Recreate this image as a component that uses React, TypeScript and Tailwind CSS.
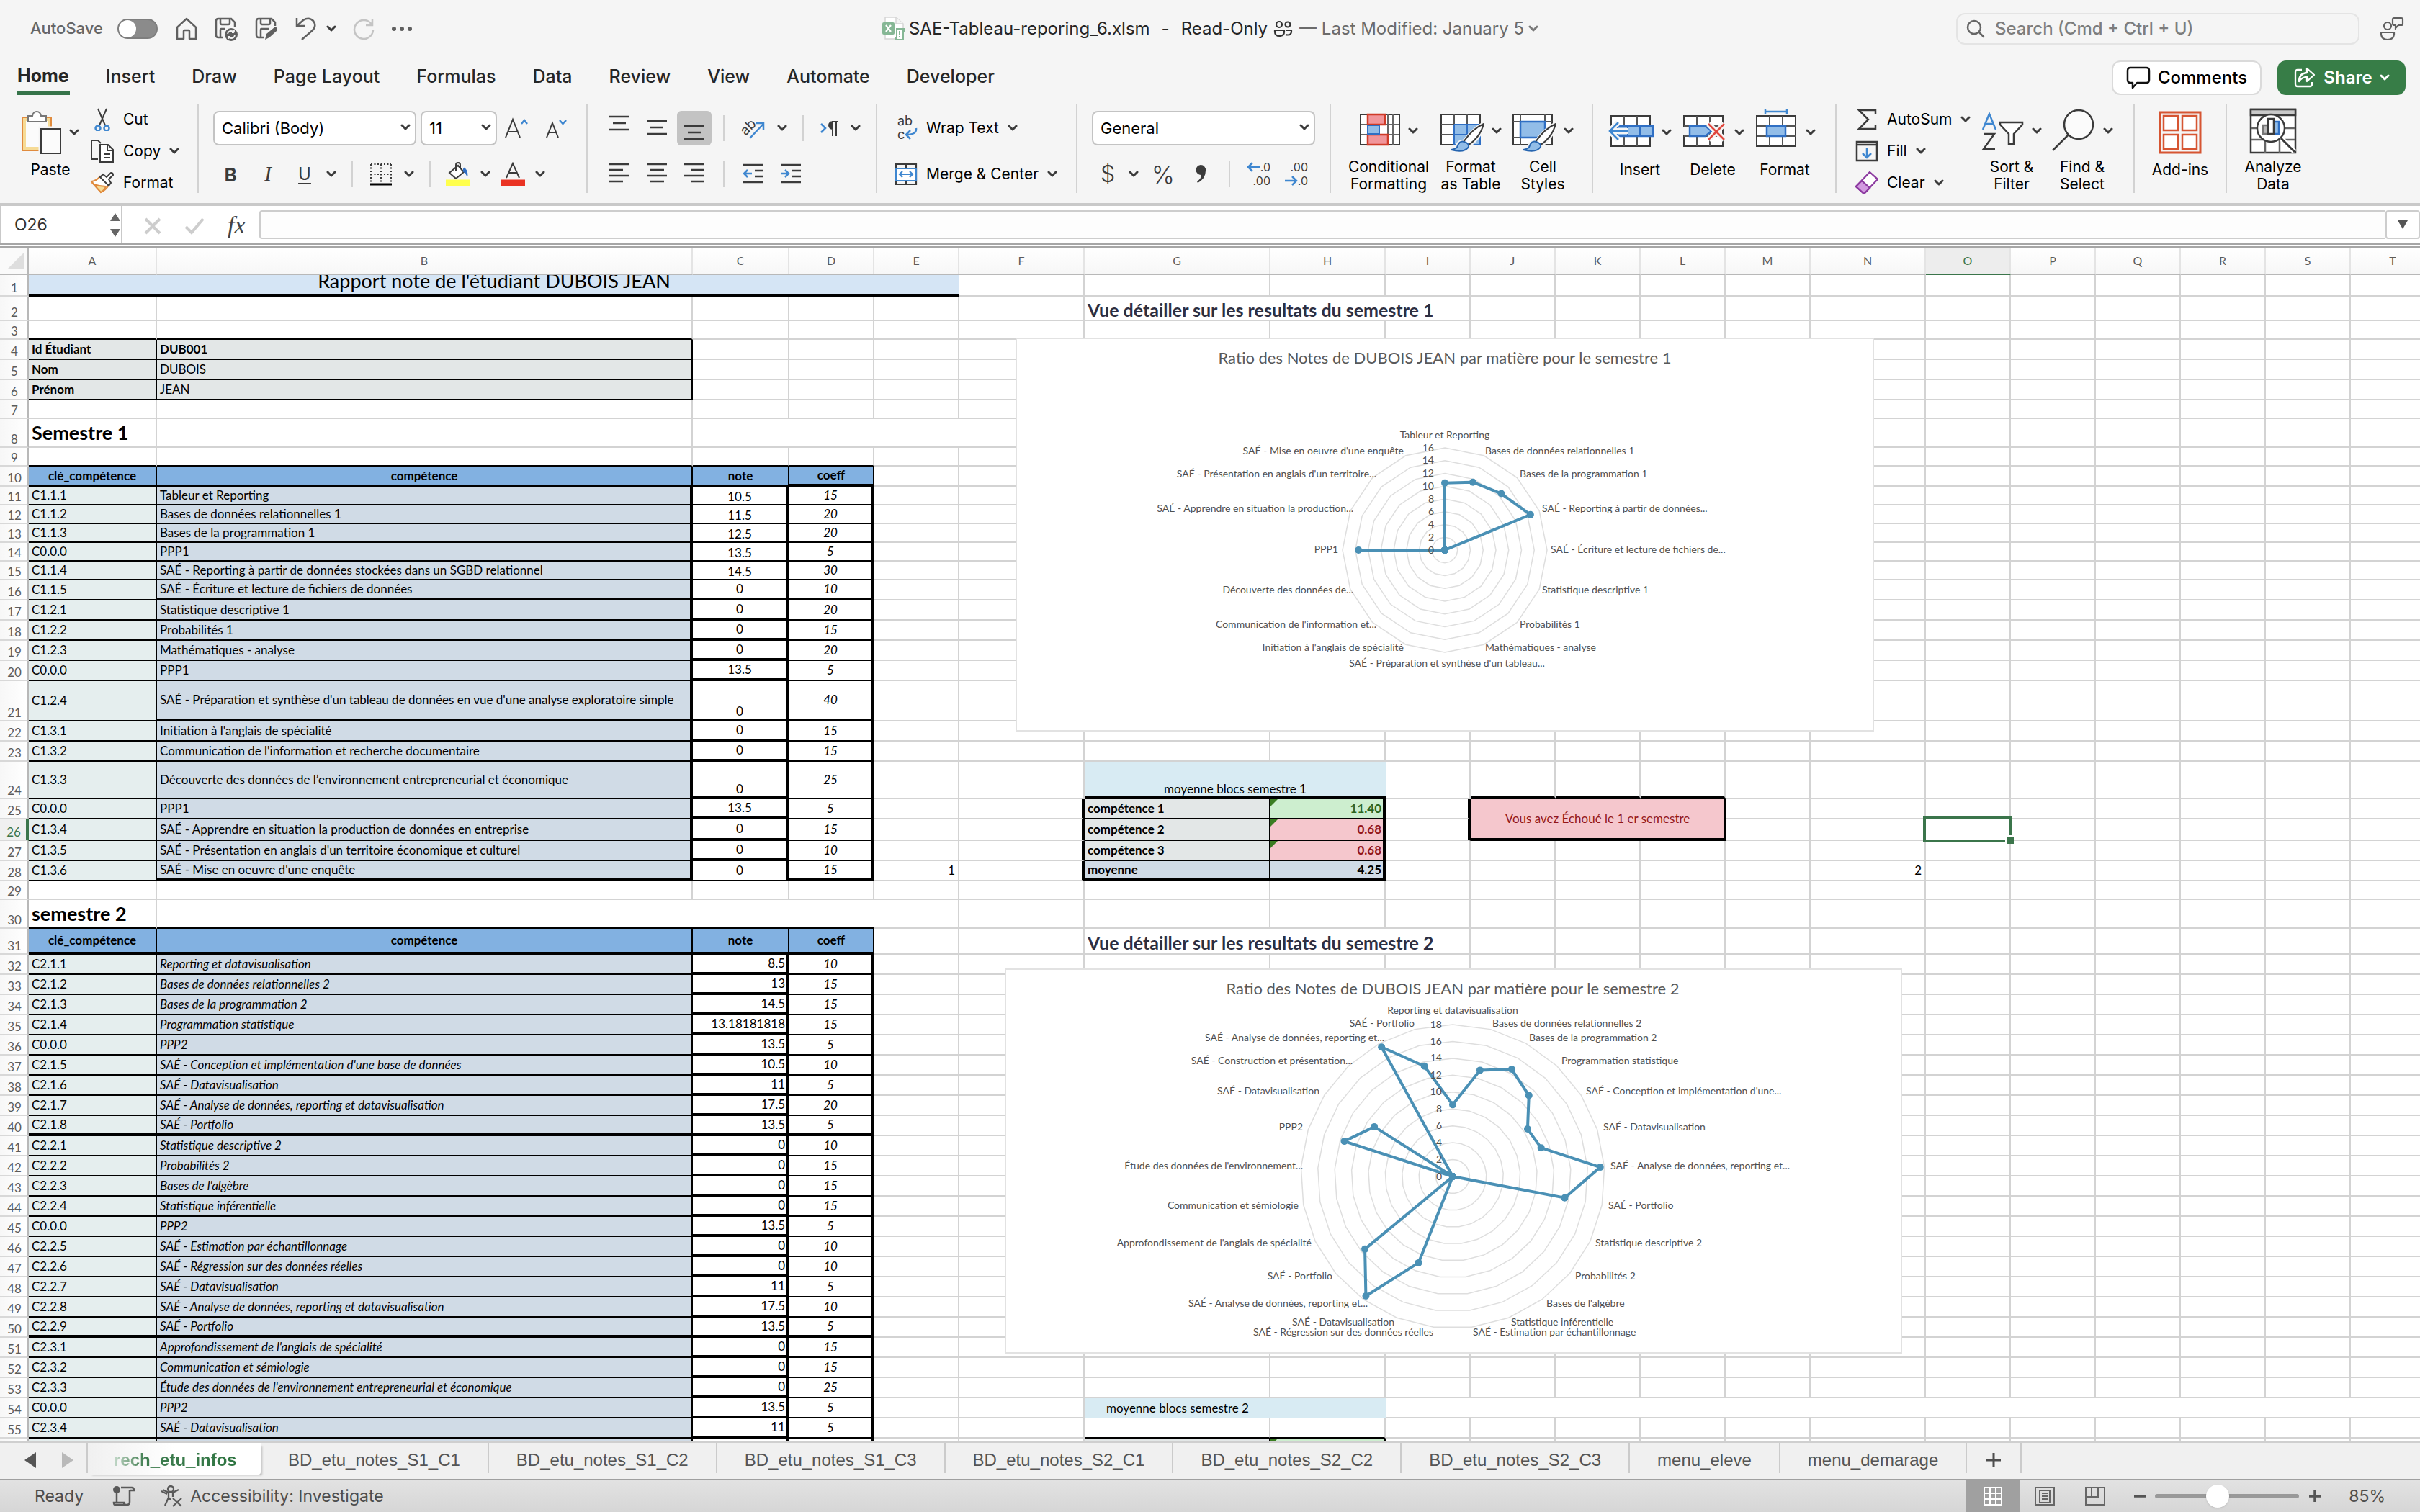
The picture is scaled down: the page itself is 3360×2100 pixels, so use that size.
import React from "react";

/* ---------- icons ---------- */

type IconProps = { w?: number; h?: number; vb?: string; children: React.ReactNode; stroke?: string; sw?: number };
const Icon = ({ w = 32, h = 32, vb, children, stroke = "#3b3b3b", sw = 2 }: IconProps) => (
  <svg
    width={w}
    height={h}
    viewBox={vb ?? `0 0 ${w} ${h}`}
    fill="none"
    stroke={stroke}
    strokeWidth={sw}
    aria-hidden="true"
    className="shrink-0"
  >
    {children}
  </svg>
);

const Chevron = ({ color = "#3b3b3b" }: { color?: string }) => (
  <Icon w={14} h={14} stroke={color} sw={3}>
    <path d="m2 4 5 5 5-5" strokeLinecap="round" strokeLinejoin="round" />
  </Icon>
);

const HomeIcon = () => (
  <Icon w={32} h={32} stroke="#606060" sw={2.5}>
    <path d="M3 14 16 2l13 12v16h-9V19q0-1-1-1h-6q-1 0-1 1v11H3Z" strokeLinejoin="round" />
  </Icon>
);
const SaveSyncIcon = () => (
  <Icon w={34} h={34} stroke="#606060" sw={2.5}>
    <path d="M13 29H6q-3 0-3-3V6q0-3 3-3h18l5 5v7M9 3v6q0 2 2 2h9q2 0 2-2V3M9 29V18q0-1 1-1h6" />
    <circle cx="24" cy="25" r="9" fill="#606060" stroke="none" />
    <path d="M19 24q1-4 5-4 3 0 4 2v-3m0 3h-3M29 26q-1 4-5 4-3 0-4-2v3m0-3h3" stroke="#f5f5f5" strokeWidth="1.8" />
  </Icon>
);
const SaveEditIcon = () => (
  <Icon w={34} h={34} stroke="#606060" sw={2.5}>
    <path d="M14 29H6q-3 0-3-3V6q0-3 3-3h18l5 5v5M9 3v6q0 2 2 2h9q2 0 2-2V3M9 29V18q0-1 1-1h10" />
    <path d="m15 32 2-8 11-9q3-1 4 2 0 2-1 3L21 29Z" fill="#606060" stroke="none" />
  </Icon>
);
const UndoIcon = () => (
  <Icon w={32} h={34} stroke="#606060" sw={2.5}>
    <path d="M3 2v11h11M3 13 12 5q8-5 14 1 5 7-1 13L10 32" />
  </Icon>
);
const RedoIcon = () => (
  <Icon w={32} h={32} stroke="#c4c4c4" sw={2.5}>
    <path d="M28 2v9h-9M27 10A13 13 0 1 0 29 18" />
  </Icon>
);
const DotsIcon = () => (
  <Icon w={30} h={8} stroke="none">
    <g fill="#606060">
      <circle cx="4" cy="4" r="3" />
      <circle cx="15" cy="4" r="3" />
      <circle cx="26" cy="4" r="3" />
    </g>
  </Icon>
);
const FileIcon = () => (
  <Icon w={34} h={34} stroke="none">
    <path d="M5 1h15l10 9v21H5Z" fill="#fff" stroke="#d5d5d5" strokeWidth="1.5" />
    <path d="M20 1v9h10" stroke="#d5d5d5" strokeWidth="1.5" fill="#f4f4f4" />
    <rect x="1" y="8" width="17" height="17" rx="2" fill="#86b795" />
    <path d="m6 12 7 9M13 12l-7 9" stroke="#fff" strokeWidth="2.2" />
    <path d="M21 17h11v3h-2v12H20v-3h1Z" fill="#fff" stroke="#86b795" strokeWidth="2" />
    <path d="M25 20v5M25 27v2" stroke="#86b795" strokeWidth="2" />
  </Icon>
);
const PeopleIcon = () => (
  <Icon w={28} h={24} stroke="#333" sw={2.2}>
    <circle cx="8" cy="6" r="4" />
    <circle cx="20" cy="6" r="3.5" />
    <path d="M2 14h13v2q0 6-6.500 6T2 16ZM18 14h7v1.500q0 5-5 5-2 0-3-.5" />
  </Icon>
);
const PresenceIcon = () => (
  <Icon w={34} h={34} stroke="#606060" sw={2.2}>
    <circle cx="11" cy="13" r="5" />
    <path d="M2 22h18v3q-1 7-9 7t-9-7ZM18 4q0-2 2-2h10q2 0 2 2v6q0 2-2 2h-4l-4 4v-4h-2q-2 0-2-2Z" />
  </Icon>
);
const SearchIcon = () => (
  <Icon w={26} h={26} stroke="#666" sw={2.5}>
    <circle cx="11" cy="11" r="9" />
    <path d="m17.500 17.500 7 7" />
  </Icon>
);
const CommentIcon = () => (
  <Icon w={34} h={32} stroke="#111" sw={2.5}>
    <path d="M2 6q0-4 4-4h22q4 0 4 4v13q0 4-4 4H15l-6 7v-7H6q-4 0-4-4Z" strokeLinejoin="round" />
  </Icon>
);
const ShareIcon = () => (
  <Icon w={32} h={30} stroke="#fff" sw={2.3}>
    <path d="M12 4H6Q3 4 3 7v17q0 3 3 3h17q3 0 3-3v-3" />
    <path d="M19 2v6Q8 9 8 20q4-6 11-6v6l10-9Z" strokeLinejoin="round" />
  </Icon>
);
const PasteIcon = () => (
  <Icon w={56} h={62} sw={2}>
    <rect x="1" y="10" width="40" height="46" fill="#f6db96" stroke="#e08b3e" />
    <rect x="6" y="15" width="30" height="36" fill="#fbfbfb" stroke="none" />
    <path d="M9 8h6q1-6 6-6t6 6h7v8H9Z" fill="#fff" stroke="#777" />
    <path d="M25 24h30v37H25Z" fill="#f5f5f5" stroke="#f5f5f5" strokeWidth="3" />
    <rect x="27" y="26" width="27" height="34" fill="#fbfbfb" />
  </Icon>
);
const CutIcon = () => (
  <Icon w={34} h={32}>
    <path d="m11 1 10 23M23 1 13 24" />
    <g stroke="#3f87d0" strokeWidth="2.5">
      <circle cx="11" cy="28" r="3.500" />
      <circle cx="23" cy="28" r="3.500" />
    </g>
  </Icon>
);
const CopyIcon = () => (
  <Icon w={34} h={32} sw={2}>
    <path d="M11 27H2V1h9l4 4" />
    <path d="M14 7h11l7 7v17H14ZM24 7v8h8M19 20h9M19 25h9" fill="#fff" />
  </Icon>
);
const BrushIcon = () => (
  <Icon w={34} h={32}>
    <path d="M2 14q7-1 12-7l12 12q-4 7-11 10Z" fill="#fff" stroke="#e08b3e" />
    <path d="M5 18q9 3 17 3-2 5-7 8Z" fill="#f6db96" stroke="#e08b3e" />
    <path d="m14 8 4-4 5 4 6-6q3 0 3 3l-6 6 3 5-3 4Z" fill="#fff" />
  </Icon>
);
const BigA = ({ down }: { down?: boolean }) => (
  <Icon w={34} h={30}>
    {down ? <path d="m5 28 8-20 8 20M8 21h10" /> : <path d="m2 28 10-25 10 25M5 20h14" />}
    {down ? <path d="m23 4 4.500 5L32 4" stroke="#3f87d0" strokeWidth="2.500" /> : <path d="m24 9 4-5 4 5" stroke="#3f87d0" strokeWidth="2.500" />}
  </Icon>
);
const BordersIcon = () => (
  <Icon w={32} h={32}>
    <path d="M2 2h28M2 16h28M2 2v26M16 2v26M30 2v26" strokeDasharray="2 2.500" />
    <path d="M1 30h30" stroke="#000" strokeWidth="3" />
  </Icon>
);
const FillColorIcon = () => (
  <Icon w={34} h={34}>
    <path d="M5 15 17 5l8 9-11 9Z" fill="#fff" />
    <path d="M14 12V4q0-3 3-3t3 3v5" />
    <path d="M25 8q5 2 5 12-3-6-6-7Z" fill="#2f6fc4" stroke="#2f6fc4" strokeWidth="1" />
    <path d="M0 29h34" stroke="#ffff4d" strokeWidth="9" />
  </Icon>
);
const FontColorIcon = () => (
  <Icon w={34} h={34}>
    <path d="m8 22 9-20 9 20M11 15h12" />
    <path d="M0 29h34" stroke="#ea3323" strokeWidth="9" />
  </Icon>
);

const lines = (spec: [number, number, number][]) => (
  <g>
    {spec.map(([x1, x2, y], i) => (
      <path key={i} d={`M${x1} ${y}H${x2}`} />
    ))}
  </g>
);
const AlignIcon = ({ kind }: { kind: "top" | "mid" | "bot" | "left" | "center" | "right" }) => {
  const three = (o: number): [number, number, number][] => [[0, 28, o], [5, 23, o + 9], [0, 28, o + 18]];
  const spec: Record<string, [number, number, number][]> = {
    top: three(2),
    mid: three(8),
    bot: three(15),
    left: [[0, 28, 4], [0, 19, 12], [0, 28, 20], [0, 19, 28]],
    center: [[0, 28, 4], [4, 24, 12], [0, 28, 20], [4, 24, 28]],
    right: [[0, 28, 4], [9, 28, 12], [0, 28, 20], [9, 28, 28]],
  };
  return (
    <Icon w={28} h={36} sw={2.5}>
      {lines(spec[kind])}
    </Icon>
  );
};
const IndentIcon = ({ inc }: { inc?: boolean }) => (
  <Icon w={28} h={32} sw={2.500}>
    {lines([[0, 28, 3], [16, 28, 11], [16, 28, 19], [0, 28, 27]])}
    {inc ? <path d="M0 15h10M6 10l5 5-5 5" stroke="#3f87d0" /> : <path d="M12 15H2M6 10l-5 5 5 5" stroke="#3f87d0" />}
  </Icon>
);
const OrientIcon = () => (
  <svg width="44" height="44" viewBox="-4 -5 44 44" className="shrink-0" aria-hidden="true">
    <text x="1" y="23" transform="rotate(-45 10 18)" fontSize="19" fontFamily="Inter, sans-serif" fill="#3b3b3b">
      ab
    </text>
    <path d="M13 31 32 11M22 10h10v10" fill="none" stroke="#3f87d0" strokeWidth="2.500" />
  </svg>
);
const DirectionIcon = () => (
  <svg width="28" height="28" viewBox="0 0 28 28" aria-hidden="true">
    <path d="m2 8 6 6-6 6" fill="none" stroke="#3f87d0" strokeWidth="2.500" />
    <path d="M18 5a5 5 0 0 0 0 10ZM18 5v20M23 5v20M17 5h9" fill="#3b3b3b" stroke="#3b3b3b" strokeWidth="2" />
  </svg>
);
const WrapIcon = () => (
  <svg width="32" height="44" viewBox="0 -4 32 44" className="shrink-0" aria-hidden="true">
    <g fontSize="18" fontFamily="Inter, sans-serif" fill="#3b3b3b">
      <text x="4" y="14">ab</text>
      <text x="4" y="33">c</text>
    </g>
    <path d="M30 18q1 9-13 9M22 21l-6 6 6 6" fill="none" stroke="#3f87d0" strokeWidth="2.500" />
  </svg>
);
const MergeIcon = () => (
  <Icon w={32} h={32} sw={2.2}>
    <path d="M2 2h28v28H2ZM16 2v28" />
    <path d="M2 8h28v17H2Z" fill="#fff" stroke="#3f87d0" />
    <path d="M7 16h18M11 12l-4 4 4 4M21 12l4 4-4 4" stroke="#3f87d0" />
  </Icon>
);
const DecimalIcon = ({ inc }: { inc?: boolean }) => (
  <svg width="34" height="44" viewBox="0 -5 34 44" className="shrink-0" aria-hidden="true">
    <g fontSize="16" fontFamily="Inter, sans-serif" fill="#3b3b3b" textAnchor="end">
      <text x="33" y="13">{inc ? ".0" : ".00"}</text>
      <text x="33" y="32">{inc ? ".00" : ".0"}</text>
    </g>
    {inc ? (
      <path d="M18 7H2M8 1 2 7l6 6" fill="none" stroke="#3f87d0" strokeWidth="2.500" />
    ) : (
      <path d="M1 26h16M11 20l6 6-6 6" fill="none" stroke="#3f87d0" strokeWidth="2.500" />
    )}
  </svg>
);
const CondIcon = () => (
  <Icon w={58} h={64} vb="0 2 58 64">
    <path d="M2 11h54v42H2Z" fill="#fff" />
    <path d="M2 25h54M2 39h54M12 11v42M40 11v42M47 11v42" stroke="#666" />
    <path d="M12 11h24v14H12ZM12 39h28v14H12Z" fill="#f1959a" stroke="#cf3a27" strokeWidth="2.500" />
    <path d="M12 26h16v12H12Z" fill="#92bde8" stroke="#2f6fc4" />
  </Icon>
);
const PaintBrush = () => (
  <g>
    <path d="M61 23Q45 32 34 48l6 5Q56 42 61 23ZM34 48q7 1 6 7-5 8-24 4 8-1 9-6 3-6 9-5Z" fill="#fff" stroke="#f5f5f5" strokeWidth="6" />
    <path d="M61 23Q45 30 33 48l6 5Q56 42 61 23Z" fill="#fff" />
    <path d="M34 48q7 2 6 7-6 9-24 4 8-1 9-6 3-7 9-5Z" fill="#92bde8" stroke="#2665b0" />
  </g>
);
const TableStyleIcon = () => (
  <Icon w={62} h={64} vb="0 1 62 64">
    <path d="M2 10h54v42H2Z" fill="#fff" />
    <path d="M20 24h36v28H20Z" fill="#92bde8" stroke="#2f6fc4" />
    <path d="M2 24h54M2 38h54M20 10v42M38 10v42" stroke="#555" />
    <path d="M20 24h36M20 38h36M20 24v28M38 24v28" stroke="#2f6fc4" />
    <PaintBrush />
  </Icon>
);
const CellStyleIcon = () => (
  <Icon w={62} h={64} vb="0 1 62 64">
    <path d="M2 10h54v42H2Z" fill="#fff" />
    <path d="M2 20h54M2 42h54M12 10v42M46 10v42" stroke="#555" />
    <path d="M12 20h34v22H12Z" fill="#92bde8" stroke="#2f6fc4" strokeWidth="2.500" />
    <PaintBrush />
  </Icon>
);
const SheetBase = () => (
  <g>
    <path d="M4 11h54v42H4Z" fill="#fff" />
    <path d="M4 25h54M4 39h54M22 11v42M40 11v42" stroke="#555" />
  </g>
);
const InsertIcon = () => (
  <Icon w={64} h={64} vb="0 2 64 64">
    <SheetBase />
    <path d="M62 25v14H12V25Z" fill="#92bde8" stroke="#2f6fc4" strokeWidth="2.500" />
    <path d="M27 25v14M44 25v14" stroke="#2f6fc4" />
    <path d="M1 32h26M14 20 2 32l12 12" stroke="#f5f5f5" strokeWidth="8" />
    <path d="M1 32h26M14 20 2 32l12 12" stroke="#3f87d0" strokeWidth="2.500" />
  </Icon>
);
const DeleteIcon = () => (
  <Icon w={64} h={64} vb="0 2 64 64">
    <SheetBase />
    <path d="M0 26h10v12H0Z" fill="#f5f5f5" stroke="none" />
    <path d="M12 25h22l8 7-8 7H12Z" fill="#92bde8" stroke="#2f6fc4" strokeWidth="2.500" />
    <path d="m38 22 22 22M60 22 38 44" stroke="#f5f5f5" strokeWidth="8" />
    <path d="m38 22 22 22M60 22 38 44" stroke="#e0473d" strokeWidth="2.500" />
  </Icon>
);
const FormatIcon = () => (
  <Icon w={62} h={64} vb="0 2 62 64">
    <SheetBase />
    <path d="M18 25h26v14H18Z" fill="#92bde8" stroke="#2f6fc4" strokeWidth="2.500" />
    <path d="M16 5h30M16 2v6M46 2v6" stroke="#3f87d0" strokeWidth="2.500" />
  </Icon>
);
const SigmaIcon = () => (
  <Icon w={32} h={32} sw={2.500}>
    <path d="M28 8V3H5l13 13L5 29h23v-5" />
  </Icon>
);
const FillIcon = () => (
  <Icon w={32} h={32} sw={2.500}>
    <path d="M2 3h28v26H2ZM2 7h28" />
    <path d="M16 11v14M10 19l6 6 6-6" stroke="#3f87d0" />
  </Icon>
);
const ClearIcon = () => (
  <Icon w={32} h={32} stroke="#8c3aa0" sw={2.300}>
    <path d="M20 1 31 11 12 31 1 21Z" fill="#fff" />
    <path d="M9 13 20 23 12 31 1 21Z" fill="#d29be0" />
  </Icon>
);
const SortIcon = () => (
  <Icon w={60} h={60} sw={2.500}>
    <path d="m2 28 9-22 9 22M5 20h12" stroke="#3f87d0" />
    <path d="M3 34h15L3 55h16" />
    <path d="M26 18h31v3L45 34v14h-7V34L26 21Z" fill="#fff" />
  </Icon>
);
const FindIcon = () => (
  <Icon w={62} h={60} sw={2.500}>
    <circle cx="38" cy="21" r="20" fill="#fbfbfb" />
    <path d="M24 35 2 57" />
  </Icon>
);
const AddInsIcon = () => (
  <Icon w={60} h={60} stroke="#d65532" sw={3}>
    <path d="M2 2h56v56H2Z" />
    <path d="M7 7h20v20H7ZM33 7h20v20H33ZM7 33h20v20H7ZM33 33h20v20H33Z" fill="#fff" strokeWidth="2.500" />
  </Icon>
);
const AnalyzeIcon = () => (
  <Icon w={66} h={64} sw={2.500}>
    <path d="M2 2h62v60H2Z" fill="#fff" />
    <path d="M2 2h62v8H2Z" fill="#c9c9c9" />
    <path d="M2 28h62M2 44h62M22 44v18M42 44v18" stroke="#666" />
    <circle cx="30" cy="28" r="19" fill="#fff" />
    <path d="m44 42 19 19" stroke="#fff" strokeWidth="7" />
    <path d="m44 42 19 19" strokeWidth="3" />
    <path d="M19 24h8v12h-8Z" fill="#b9b9b9" stroke="#777" />
    <path d="M33 19h8v17h-8Z" fill="#92bde8" stroke="#2f6fc4" />
    <path d="M26 15h8v21h-8Z" fill="#fff" />
  </Icon>
);

/* ---------- ribbon parts ---------- */

const IconButton = ({ label, w, children }: { label: string; w: string; children: React.ReactNode }) => (
  <button aria-label={label} className={`flex h-12 shrink-0 items-center justify-center ${w}`}>
    {children}
  </button>
);
const Drop = ({ label }: { label: string }) => (
  <button aria-label={`${label} options`} className="flex h-12 w-7 shrink-0 items-center justify-center">
    <Chevron />
  </button>
);
const Sep = () => <div className="mx-3.5 h-9 w-0.5 shrink-0 bg-[#d2d2d2]" />;
const Group = ({ w, children, last }: { w: string; children: React.ReactNode; last?: boolean }) => (
  <div className={`flex h-[124px] shrink-0 ${last ? "" : "border-r-2 border-[#d2d2d2]"} ${w}`}>{children}</div>
);
const TwoRows = ({ pl, a, b }: { pl: string; a: React.ReactNode; b: React.ReactNode }) => (
  <div className={`flex flex-col gap-4 pt-2.5 ${pl}`}>
    <div className="flex h-12 items-center">{a}</div>
    <div className="flex h-12 items-center">{b}</div>
  </div>
);
const BigButton = ({ w, icon, label, drop = true }: { w: string; icon: React.ReactNode; label: string[]; drop?: boolean }) => (
  <button className={`flex h-[124px] shrink-0 flex-col items-center ${w}`}>
    <span className="flex h-20 items-center gap-2.5">
      {icon}
      {drop && <Chevron />}
    </span>
    {label.map((l) => (
      <span key={l} className="text-[21px] leading-6 whitespace-nowrap text-black">
        {l}
      </span>
    ))}
  </button>
);
const SmallButton = ({ icon, label, drop }: { icon: React.ReactNode; label: string; drop?: boolean }) => (
  <button className="flex h-11 shrink-0 items-center gap-3 text-[21px] whitespace-nowrap text-black">
    {icon}
    {label}
    {drop && <Chevron />}
  </button>
);
const Combo = ({ w, label, value }: { w: string; label: string; value: string }) => (
  <div className={`relative h-12 shrink-0 ${w}`}>
    <select
      aria-label={label}
      className="h-full w-full appearance-none rounded-lg border-2 border-[#c3c3c3] bg-white pl-2.5 text-[22px] text-black"
    >
      <option>{value}</option>
    </select>
    <span className="pointer-events-none absolute top-4 right-2">
      <Chevron />
    </span>
  </div>
);

const TitleBar = () => (
  <header className="grid h-20 grid-cols-[1fr_auto_1fr] items-center text-2xl">
    <div className="flex items-center pl-[42px]">
      <label className="flex items-center gap-5 text-[22px] font-medium text-[#666]">
        AutoSave
        <input
          type="checkbox"
          role="switch"
          className="h-7 w-14 appearance-none rounded-full border-2 border-[#7e7e7e] bg-[#8b8b8b] before:block before:size-6 before:rounded-full before:bg-white before:content-['']"
        />
      </label>
      <div className="flex items-center gap-[22px] pl-6">
        <button aria-label="Home"><HomeIcon /></button>
        <button aria-label="Save and sync"><SaveSyncIcon /></button>
        <button aria-label="Save as"><SaveEditIcon /></button>
        <button aria-label="Undo" className="flex items-center gap-3"><UndoIcon /><Chevron /></button>
        <button aria-label="Redo"><RedoIcon /></button>
        <button aria-label="More commands"><DotsIcon /></button>
      </div>
    </div>
    <button className="flex items-center whitespace-nowrap text-[#262626]">
      <FileIcon />
      <span className="pl-1">SAE-Tableau-reporing_6.xlsm</span>
      <span className="px-4">-</span>
      <span className="pr-2">Read-Only</span>
      <PeopleIcon />
      <span className="pr-1.5 pl-2 text-[#6b6b6b]">— Last Modified: January 5</span>
      <Chevron color="#7a7a7a" />
    </button>
    <div className="flex items-center justify-end gap-7 pr-[22px]">
      <label className="flex h-11 w-[560px] items-center gap-3.5 rounded-xl border-2 border-[#e4e4e4] pl-3">
        <SearchIcon />
        <input
          aria-label="Search"
          placeholder="Search (Cmd + Ctrl + U)"
          className="w-full bg-transparent font-medium outline-none placeholder:text-[#7d7d7d]"
        />
      </label>
      <button aria-label="Presence"><PresenceIcon /></button>
    </div>
  </header>
);

const menu = ["Insert", "Draw", "Page Layout", "Formulas", "Data", "Review", "View", "Automate", "Developer"];
const MenuBar = () => (
  <div className="flex h-16 items-start justify-between pr-5 pl-[23px]">
    <nav className="flex gap-[49px] text-[25px] leading-[50px] font-medium text-[#262626]">
      <button className="h-[52px] border-b-[6px] border-[#36744a] px-px leading-[50px] font-bold">Home</button>
      {menu.map((m) => (
        <button key={m} className="px-px whitespace-nowrap">{m}</button>
      ))}
    </nav>
    <div className="flex gap-[22px] pt-1 text-2xl font-medium">
      <button className="flex h-12 w-[208px] items-center justify-center gap-2.5 rounded-xl border-2 border-[#dadada] bg-white text-black">
        <CommentIcon />
        Comments
      </button>
      <button className="flex h-12 w-[178px] items-center justify-center gap-2.5 rounded-xl bg-[#377d47] font-semibold text-white">
        <ShareIcon />
        Share
        <Chevron color="#fff" />
      </button>
    </div>
  </div>
);

const Ribbon = () => (
  <div className="flex h-[142px] border-b-4 border-[#c9c9c9]">
    <Group w="w-[276px]">
      <div className="flex gap-4 pl-[31px]">
        <BigButton w="w-[78px]" icon={<PasteIcon />} label={["Paste"]} />
        <div className="flex flex-col">
          <SmallButton icon={<CutIcon />} label="Cut" />
          <SmallButton icon={<CopyIcon />} label="Copy" drop />
          <SmallButton icon={<BrushIcon />} label="Format" />
        </div>
      </div>
    </Group>
    <Group w="w-[540px]">
      <TwoRows
        pl="pl-5"
        a={
          <>
            <Combo w="w-[282px]" label="Font" value="Calibri (Body)" />
            <div className="w-1.5" />
            <Combo w="w-[106px]" label="Font size" value="11" />
            <IconButton label="Increase font size" w="w-[54px]"><BigA /></IconButton>
            <IconButton label="Decrease font size" w="w-[54px]"><BigA down /></IconButton>
          </>
        }
        b={
          <>
            <IconButton label="Bold" w="w-12"><span className="text-[26px] font-bold text-[#3b3b3b]">B</span></IconButton>
            <IconButton label="Italic" w="w-14"><span className="font-['Liberation_Serif',serif] text-[29px] text-[#3b3b3b] italic">I</span></IconButton>
            <IconButton label="Underline" w="w-[46px]"><span className="text-2xl text-[#3b3b3b] underline underline-offset-4">U</span></IconButton>
            <Drop label="Underline" />
            <Sep />
            <IconButton label="Borders" w="w-[50px]"><BordersIcon /></IconButton>
            <Drop label="Borders" />
            <Sep />
            <IconButton label="Fill color" w="w-12"><FillColorIcon /></IconButton>
            <Drop label="Fill color" />
            <IconButton label="Font color" w="w-12"><FontColorIcon /></IconButton>
            <Drop label="Font color" />
          </>
        }
      />
    </Group>
    <Group w="w-[402px]">
      <TwoRows
        pl="pl-[18px]"
        a={
          <>
            <IconButton label="Top align" w="w-[52px]"><AlignIcon kind="top" /></IconButton>
            <IconButton label="Middle align" w="w-[52px]"><AlignIcon kind="mid" /></IconButton>
            <IconButton label="Bottom align" w="w-12 mx-0.5 rounded-md bg-[#c3c3c3]"><AlignIcon kind="bot" /></IconButton>
            <Sep />
            <IconButton label="Orientation" w="w-[52px]"><OrientIcon /></IconButton>
            <Drop label="Orientation" />
            <Sep />
            <IconButton label="Text direction" w="w-11"><DirectionIcon /></IconButton>
            <Drop label="Text direction" />
          </>
        }
        b={
          <>
            <IconButton label="Align left" w="w-[52px]"><AlignIcon kind="left" /></IconButton>
            <IconButton label="Center" w="w-[52px]"><AlignIcon kind="center" /></IconButton>
            <IconButton label="Align right" w="w-[52px]"><AlignIcon kind="right" /></IconButton>
            <Sep />
            <IconButton label="Decrease indent" w="w-[52px]"><IndentIcon /></IconButton>
            <IconButton label="Increase indent" w="w-[52px]"><IndentIcon inc /></IconButton>
          </>
        }
      />
    </Group>
    <Group w="w-[278px]">
      <TwoRows
        pl="pl-6"
        a={<SmallButton icon={<WrapIcon />} label="Wrap Text" drop />}
        b={<SmallButton icon={<MergeIcon />} label="Merge & Center" drop />}
      />
    </Group>
    <Group w="w-[352px]">
      <TwoRows
        pl="pl-5"
        a={<Combo w="w-[310px]" label="Number format" value="General" />}
        b={
          <>
            <IconButton label="Currency" w="w-11"><span className="text-[32px] font-light text-[#3b3b3b]">$</span></IconButton>
            <Drop label="Currency" />
            <IconButton label="Percent" w="w-[54px]"><span className="text-[34px] font-light text-[#3b3b3b]">%</span></IconButton>
            <IconButton label="Comma style" w="w-[50px]">
              <Icon w={16} h={26} stroke="none"><path d="M8 0a7 7 0 0 1 7 8q0 11-11 17l-1-2q6-4 6-9A7 7 0 1 1 8 0Z" fill="#3b3b3b" /></Icon>
            </IconButton>
            <Sep />
            <IconButton label="Increase decimal" w="w-[52px]"><DecimalIcon inc /></IconButton>
            <IconButton label="Decrease decimal" w="w-[52px]"><DecimalIcon /></IconButton>
          </>
        }
      />
    </Group>
    <Group w="w-[364px]">
      <div className="flex gap-4 pl-6">
        <BigButton w="w-28" icon={<CondIcon />} label={["Conditional", "Formatting"]} />
        <BigButton w="w-[84px]" icon={<TableStyleIcon />} label={["Format", "as Table"]} />
        <BigButton w="w-[84px]" icon={<CellStyleIcon />} label={["Cell", "Styles"]} />
      </div>
    </Group>
    <Group w="w-[338px]">
      <div className="flex gap-4 pl-[22px]">
        <BigButton w="w-[86px]" icon={<InsertIcon />} label={["Insert"]} />
        <BigButton w="w-[84px]" icon={<DeleteIcon />} label={["Delete"]} />
        <BigButton w="w-[84px]" icon={<FormatIcon />} label={["Format"]} />
      </div>
    </Group>
    <Group w="w-[414px]">
      <div className="flex pl-[26px]">
        <div className="flex w-[174px] flex-col">
          <SmallButton icon={<SigmaIcon />} label="AutoSum" drop />
          <SmallButton icon={<FillIcon />} label="Fill" drop />
          <SmallButton icon={<ClearIcon />} label="Clear" drop />
        </div>
        <BigButton w="w-[86px]" icon={<SortIcon />} label={["Sort &", "Filter"]} />
        <div className="w-3.5" />
        <BigButton w="w-[82px]" icon={<FindIcon />} label={["Find &", "Select"]} />
      </div>
    </Group>
    <Group w="w-[128px]">
      <BigButton w="w-[126px]" icon={<AddInsIcon />} label={["Add-ins"]} drop={false} />
    </Group>
    <Group w="w-[128px]" last>
      <BigButton w="w-[128px]" icon={<AnalyzeIcon />} label={["Analyze", "Data"]} drop={false} />
    </Group>
  </div>
);

const FormulaBar = () => (
  <div className="flex h-[58px] items-center border-b-[6px] border-double border-[#a6a6a6] bg-white">
    <div className="flex h-full w-[170px] shrink-0 items-center border-x-2 border-[#c9c9c9] pl-[18px]">
      <input aria-label="Name box" defaultValue="O26" className="w-full bg-transparent text-[23px] text-[#333] outline-none" />
      <button aria-label="Name box options" className="pr-px">
        <Icon w={14} h={36} stroke="none"><path d="M7 2l7 11H0ZM7 35 0 24h14Z" fill="#666" /></Icon>
      </button>
    </div>
    <button aria-label="Cancel" className="pt-1 pl-[30px]">
      <Icon w={24} h={24} stroke="#cdcdcd" sw={4}><path d="m2 2 20 20M22 2 2 22" /></Icon>
    </button>
    <button aria-label="Enter" className="pt-1 pl-8">
      <Icon w={28} h={24} stroke="#cdcdcd" sw={4}><path d="m2 13 8 8L26 2" /></Icon>
    </button>
    <button aria-label="Insert function" className="w-[76px] pl-8 text-left font-['Liberation_Serif',serif] text-[34px] text-[#444] italic">fx</button>
    <input aria-label="Formula bar" className="h-10 flex-1 rounded-l border-2 border-r-0 border-[#cdcdcd] bg-[#fdfdfd] px-2 text-[22px] outline-none" />
    <button aria-label="Expand formula bar" className="flex h-10 w-12 items-center justify-center rounded border-2 border-[#cdcdcd] bg-white">
      <Icon w={14} h={12} stroke="none"><path d="M0 0h14L7 12Z" fill="#555" /></Icon>
    </button>
  </div>
);

/* ---------- worksheet ---------- */

const columns: [string, string][] = [
  ["A", "w-[178px]"], ["B", "w-[744px]"], ["C", "w-[134px]"], ["D", "w-[118px]"], ["E", "w-[118px]"],
  ["F", "w-[174px]"], ["G", "w-[258px]"], ["H", "w-[160px]"], ["I", "w-[118px]"], ["J", "w-[118px]"],
  ["K", "w-[118px]"], ["L", "w-[118px]"], ["M", "w-[118px]"], ["N", "w-[160px]"], ["O", "w-[118px]"],
  ["P", "w-[118px]"], ["Q", "w-[118px]"], ["R", "w-[118px]"], ["S", "w-[118px]"], ["T", "w-[118px]"],
];

const rowHeights: Record<number, string> = {
  1: "h-[30px]", 2: "h-[34px]", 3: "h-[26px]", 7: "h-[26px]", 8: "h-[40px]", 9: "h-[26px]",
  11: "h-[26px]", 12: "h-[26px]", 13: "h-[26px]", 14: "h-[26px]", 15: "h-[26px]",
  21: "h-[56px]", 24: "h-[52px]", 26: "h-[30px]", 29: "h-[26px]", 30: "h-[40px]", 31: "h-[36px]",
};

type Line = "grid" | "thin" | "thick" | "none";
const rightLine: Record<Line, string> = {
  grid: "border-r-2 border-r-[#d3d3d3]",
  thin: "border-r-2 border-r-black",
  thick: "border-r-4 border-r-black",
  none: "border-r-0",
};
const bottomLine: Record<Line, string> = {
  grid: "border-b-2 border-b-[#d3d3d3]",
  thin: "border-b-2 border-b-black",
  thick: "border-b-4 border-b-black",
  none: "border-b-0",
};

type Cell = { text?: React.ReactNode; cls?: string; right?: Line; bottom?: Line; span?: number; rows?: number };
const cells: Record<string, Cell> = {};
const put = (ref: string, c: Cell) => {
  cells[ref] = { ...cells[ref], ...c };
};

const KEY = "bg-[#e5eeee] pl-1";
const NAME = "bg-[#d0dbe6] pl-1";
const HEAD = "bg-[#82b1e1] text-center font-bold";
const INFO = "bg-[#e3e7e7] pl-1";

put("A1", {
  span: 5, bottom: "thick", right: "none", cls: "bg-[#d5e5f5]",
  text: <div className="flex h-[26px] items-end justify-center overflow-hidden text-[27px] leading-9">Rapport note de l'étudiant DUBOIS JEAN</div>,
});
put("A3", { bottom: "thin" });
put("B3", { bottom: "thin" });
[["Id Étudiant", "DUB001"], ["Nom", "DUBOIS"], ["Prénom", "JEAN"]].forEach(([a, b], i) => {
  put(`A${4 + i}`, { text: a, cls: `${INFO} font-bold`, right: "thin", bottom: "thin" });
  put(`B${4 + i}`, { text: b, cls: i ? INFO : `${INFO} font-bold`, right: "thin", bottom: "thin" });
});

put("A8", { text: "Semestre 1", cls: "pl-1 text-[27px] font-bold leading-8" });
put("C8", { span: 4, right: "none" });
put("A30", { text: "semestre 2", cls: "pl-1 text-[27px] font-bold leading-8" });

const head = (row: number, bottoms: Line[]) => {
  ["clé_compétence", "compétence", "note", "coeff"].forEach((t, i) => {
    const col = "ABCD"[i];
    put(`${col}${row - 1}`, { bottom: "thin" });
    put(`${col}${row}`, { text: t, cls: HEAD, right: "thin", bottom: bottoms[i] });
  });
};
head(10, ["thin", "thin", "thin", "thick"]);
head(31, ["thick", "thick", "thick", "thick"]);
put("B30", { span: 3, right: "none" });

const s1: [string, string, string, string][] = [
  ["C1.1.1", "Tableur et Reporting", "10.5", "15"],
  ["C1.1.2", "Bases de données relationnelles 1", "11.5", "20"],
  ["C1.1.3", "Bases de la programmation 1", "12.5", "20"],
  ["C0.0.0", "PPP1", "13.5", "5"],
  ["C1.1.4", "SAÉ - Reporting à partir de données stockées dans un SGBD relationnel", "14.5", "30"],
  ["C1.1.5", "SAÉ - Écriture et lecture de fichiers de données", "0", "10"],
  ["C1.2.1", "Statistique descriptive 1", "0", "20"],
  ["C1.2.2", "Probabilités 1", "0", "15"],
  ["C1.2.3", "Mathématiques - analyse", "0", "20"],
  ["C0.0.0", "PPP1", "13.5", "5"],
  ["C1.2.4", "SAÉ - Préparation et synthèse d'un tableau de données en vue d'une analyse exploratoire simple", "0", "40"],
  ["C1.3.1", "Initiation à l'anglais de spécialité", "0", "15"],
  ["C1.3.2", "Communication de l'information et recherche documentaire", "0", "15"],
  ["C1.3.3", "Découverte des données de l’environnement entrepreneurial et économique", "0", "25"],
  ["C0.0.0", "PPP1", "13.5", "5"],
  ["C1.3.4", "SAÉ - Apprendre en situation la production de données en entreprise", "0", "15"],
  ["C1.3.5", "SAÉ - Présentation en anglais d'un territoire économique et culturel", "0", "10"],
  ["C1.3.6", "SAÉ - Mise en oeuvre d'une enquête", "0", "15"],
];
s1.forEach(([k, n, note, c], i) => {
  const row = 11 + i;
  const end = [16, 21, 28].includes(row);
  const low = row < 16 || row === 21 || row === 24;
  put(`A${row}`, { text: k, cls: KEY, right: "thin", bottom: "thin" });
  put(`B${row}`, { text: n, cls: NAME, right: "thick", bottom: end ? "thick" : "thin" });
  put(`C${row}`, { text: note, cls: low ? "text-center align-bottom" : "text-center", right: "thick", bottom: row >= 16 && row !== 28 ? "thick" : "thin" });
  put(`D${row}`, { text: c, cls: "text-center italic", right: "thick", bottom: end ? "thick" : "thin" });
});

const s2: [string, string, string, string][] = [
  ["C2.1.1", "Reporting et datavisualisation", "8.5", "10"],
  ["C2.1.2", "Bases de données relationnelles 2", "13", "15"],
  ["C2.1.3", "Bases de la programmation 2", "14.5", "15"],
  ["C2.1.4", "Programmation statistique", "13.18181818", "15"],
  ["C0.0.0", "PPP2", "13.5", "5"],
  ["C2.1.5", "SAÉ - Conception et implémentation d'une base de données", "10.5", "10"],
  ["C2.1.6", "SAÉ - Datavisualisation", "11", "5"],
  ["C2.1.7", "SAÉ - Analyse de données, reporting et datavisualisation", "17.5", "20"],
  ["C2.1.8", "SAÉ - Portfolio", "13.5", "5"],
  ["C2.2.1", "Statistique descriptive 2", "0", "10"],
  ["C2.2.2", "Probabilités 2", "0", "15"],
  ["C2.2.3", "Bases de l'algèbre", "0", "15"],
  ["C2.2.4", "Statistique inférentielle", "0", "15"],
  ["C0.0.0", "PPP2", "13.5", "5"],
  ["C2.2.5", "SAÉ - Estimation par échantillonnage", "0", "10"],
  ["C2.2.6", "SAÉ - Régression sur des données réelles", "0", "10"],
  ["C2.2.7", "SAÉ - Datavisualisation", "11", "5"],
  ["C2.2.8", "SAÉ - Analyse de données, reporting et datavisualisation", "17.5", "10"],
  ["C2.2.9", "SAÉ - Portfolio", "13.5", "5"],
  ["C2.3.1", "Approfondissement de l'anglais de spécialité", "0", "15"],
  ["C2.3.2", "Communication et sémiologie", "0", "15"],
  ["C2.3.3", "Étude des données de l'environnement entrepreneurial et économique", "0", "25"],
  ["C0.0.0", "PPP2", "13.5", "5"],
  ["C2.3.4", "SAÉ - Datavisualisation", "11", "5"],
  ["", "", "", ""],
];
s2.forEach(([k, n, note, c], i) => {
  const row = 32 + i;
  const b: Line = row === 40 || row === 50 ? "thick" : "thin";
  put(`A${row}`, { text: k, cls: KEY, right: "thin", bottom: b });
  put(`B${row}`, { text: n, cls: `${NAME} italic`, right: "thin", bottom: b });
  put(`C${row}`, { text: note, cls: "text-right pr-0.5", right: "thick", bottom: "thick" });
  put(`D${row}`, { text: c, cls: "text-center italic", right: "thick", bottom: b });
});

put("E28", { text: "1", cls: "text-right pr-1" });
put("N28", { text: "2", cls: "text-right pr-1" });

const TITLE = "pl-1 pt-1 text-[25px] font-bold leading-7 text-[#2d2f42]";
put("G2", { span: 3, text: "Vue détailler sur les resultats du semestre 1", cls: TITLE });
put("G31", { span: 3, text: "Vue détailler sur les resultats du semestre 2", cls: TITLE });

const Flag = () => (
  <svg width="10" height="10" viewBox="0 0 10 10" className="absolute top-0 left-0" aria-hidden="true">
    <path d="M0 0h10L0 10Z" fill="#3a7d22" />
  </svg>
);
put("G24", { span: 2, text: "moyenne blocs semestre 1", cls: "bg-[#d8ebf3] text-center align-bottom", right: "none", bottom: "thick" });
[
  ["compétence 1", "11.40", "bg-[#cdeecf] text-[#2c651c]"],
  ["compétence 2", "0.68", "bg-[#f5c7cd] text-[#93161a]"],
  ["compétence 3", "0.68", "bg-[#f5c7cd] text-[#93161a]"],
  ["moyenne", "4.25", "bg-[#d0dbe6] text-black"],
].forEach(([l, v, c], i) => {
  const row = 25 + i;
  const b: Line = i === 3 ? "thick" : "thin";
  put(`F${row}`, { right: "thick" });
  put(`G${row}`, { text: l, cls: `pl-1 font-bold ${i === 3 ? "bg-[#d0dbe6]" : "bg-[#e3e7e7]"}`, right: "thin", bottom: b });
  put(`H${row}`, { text: <>{i < 3 && <Flag />}{v}</>, cls: `relative pr-0.5 text-right font-bold ${c}`, right: "thick", bottom: b });
});
["J24", "K24", "L24"].forEach((r) => put(r, { bottom: "thick" }));
put("I25", { right: "thick" });
put("I26", { right: "thick" });
put("J25", { span: 3, rows: 2, text: "Vous avez Échoué le 1 er semestre", cls: "bg-[#f5c7cd] text-center text-[#93161a]", right: "thin", bottom: "thick" });
put("O26", {
  cls: "relative",
  text: (
    <div className="absolute -inset-1 border-4 border-[#3b754b]">
      <div className="absolute -right-1.5 -bottom-1.5 size-3 border-t-2 border-l-2 border-white bg-[#3b754b]" />
    </div>
  ),
});
put("G54", { span: 2, text: "moyenne blocs semestre 2", cls: "bg-[#d8ebf3] pl-[30px]", right: "none", bottom: "none" });
put("I54", { span: 12 });
put("G55", { bottom: "thin" });
put("H55", { bottom: "thin" });
put("G56", { cls: "bg-[#e3e7e7]", right: "thin" });
put("H56", { cls: "relative bg-[#cdeecf]", right: "thin", text: <Flag /> });

const Row = ({ row }: { row: number }) => {
  const out: React.ReactNode[] = [];
  for (let i = 0; i < columns.length; ) {
    if (row === 26 && i === 9) {
      i += 3;
      continue;
    }
    const ref = `${columns[i][0]}${row}`;
    const c = cells[ref] ?? {};
    out.push(
      <td
        key={ref}
        colSpan={c.span ?? 1}
        rowSpan={c.rows ?? 1}
        className={`p-0 whitespace-nowrap ${rightLine[c.right ?? "grid"]} ${bottomLine[c.bottom ?? "grid"]} ${c.cls ?? ""}`}
      >
        {c.text}
      </td>,
    );
    i += c.span ?? 1;
  }
  const active = row === 26;
  return (
    <tr className={rowHeights[row] ?? "h-[28px]"}>
      <th
        scope="row"
        className={`border-b-2 border-b-[#d8d8d8] p-0 pl-0.5 text-center align-bottom font-normal ${
          active ? "border-r-4 border-r-[#3b754b] bg-[#f0f0f0] text-[#3b754b]" : "border-r-2 border-r-[#b8b8b8] bg-linear-to-r from-[#f7f7f7] to-white text-[#5c5c5c]"
        }`}
      >
        {row}
      </th>
      {out}
    </tr>
  );
};

/* ---------- radar charts ---------- */

type Label = [string, number, number, "start" | "middle" | "end"];
const Radar = ({
  title, width, height, titleY, cx, cy, r, max, values, labels, x0, y0,
}: {
  title: string; width: number; height: number; titleY: number; cx: number; cy: number; r: number; max: number;
  values: number[]; labels: Label[]; x0: number; y0: number;
}) => {
  const n = values.length;
  const pt = (i: number, v: number) => {
    const a = (i / n) * Math.PI * 2;
    return [cx + Math.sin(a) * r * (v / max), cy - Math.cos(a) * r * (v / max)];
  };
  const poly = (f: (i: number) => number) => values.map((_, i) => pt(i, f(i)).join(",")).join(" ");
  const ticks = Array.from({ length: max / 2 + 1 }, (_, i) => i * 2);
  return (
    <svg width={width} height={height} viewBox={`0 0 ${width} ${height}`} role="img" aria-label={title} className="bg-white outline-2 outline-[#e2e2e2]">
      <g fill="none" stroke="#dedede" strokeWidth="1.5">
        {ticks.slice(1).map((t) => (
          <polygon key={t} points={poly(() => t)} />
        ))}
      </g>
      <text x={cx} y={titleY} fill="#595959" fontSize="22" textAnchor="middle" dominantBaseline="central">{title}</text>
      <polygon points={poly((i) => values[i])} fill="none" stroke="#4a90b5" strokeWidth="4" strokeLinejoin="round" />
      {values.map((v, i) => {
        const [x, y] = pt(i, v);
        return <circle key={i} cx={x} cy={y} r="5" fill="#4a90b5" />;
      })}
      <g fill="#505050" fontSize="14">
        {ticks.map((t) => (
          <text key={t} x={cx - 15} y={cy - 1 - (r * t) / max} textAnchor="end" dominantBaseline="central">{t}</text>
        ))}
        {labels.map(([t, x, y, anchor], i) => (
          <text key={i} x={x - x0} y={y - y0 - 1} textAnchor={anchor} dominantBaseline="central">{t}</text>
        ))}
      </g>
    </svg>
  );
};

const labels1: Label[] = [
  ["Tableur et Reporting", 2006, 604, "middle"],
  ["Bases de données relationnelles 1", 2062, 626, "start"],
  ["Bases de la programmation 1", 2110, 658, "start"],
  ["SAÉ - Reporting à partir de données...", 2141, 706, "start"],
  ["SAÉ - Écriture et lecture de fichiers de...", 2153, 763, "start"],
  ["Statistique descriptive 1", 2141, 819, "start"],
  ["Probabilités 1", 2110, 867, "start"],
  ["Mathématiques - analyse", 2062, 899, "start"],
  ["SAÉ - Préparation et synthèse d'un tableau...", 2009, 921, "middle"],
  ["Initiation à l'anglais de spécialité", 1949, 899, "end"],
  ["Communication de l'information et...", 1911, 867, "end"],
  ["Découverte des données de...", 1879, 819, "end"],
  ["PPP1", 1858, 763, "end"],
  ["SAÉ - Apprendre en situation la production...", 1879, 706, "end"],
  ["SAÉ - Présentation en anglais d'un territoire...", 1911, 658, "end"],
  ["SAÉ - Mise en oeuvre d'une enquête", 1949, 626, "end"],
];
const labels2: Label[] = [
  ["Reporting et datavisualisation", 2017, 1403, "middle"],
  ["Bases de données relationnelles 2", 2072, 1421, "start"],
  ["Bases de la programmation 2", 2123, 1441, "start"],
  ["Programmation statistique", 2168, 1473, "start"],
  ["SAÉ - Conception et implémentation d'une...", 2202, 1515, "start"],
  ["SAÉ - Datavisualisation", 2226, 1565, "start"],
  ["SAÉ - Analyse de données, reporting et...", 2236, 1619, "start"],
  ["SAÉ - Portfolio", 2233, 1674, "start"],
  ["Statistique descriptive 2", 2215, 1726, "start"],
  ["Probabilités 2", 2187, 1772, "start"],
  ["Bases de l'algèbre", 2147, 1810, "start"],
  ["Statistique inférentielle", 2098, 1836, "start"],
  ["SAÉ - Estimation par échantillonnage", 2045, 1850, "start"],
  ["SAÉ - Régression sur des données réelles", 1990, 1850, "end"],
  ["SAÉ - Datavisualisation", 1936, 1836, "end"],
  ["SAÉ - Analyse de données, reporting et...", 1899, 1810, "end"],
  ["SAÉ - Portfolio", 1850, 1772, "end"],
  ["Approfondissement de l'anglais de spécialité", 1821, 1726, "end"],
  ["Communication et sémiologie", 1803, 1674, "end"],
  ["Étude des données de l'environnement...", 1809, 1619, "end"],
  ["PPP2", 1809, 1565, "end"],
  ["SAÉ - Datavisualisation", 1832, 1515, "end"],
  ["SAÉ - Construction et présentation...", 1878, 1473, "end"],
  ["SAÉ - Analyse de données, reporting et...", 1922, 1441, "end"],
  ["SAÉ - Portfolio", 1964, 1421, "end"],
];

const Sheet = () => (
  <main className="relative min-h-0 flex-1 overflow-hidden bg-white font-[Lato,sans-serif] text-[17px] leading-5 text-black">
    <table className="w-full min-w-[3382px] table-fixed border-separate border-spacing-0">
      <colgroup>
        <col className="w-10" />
        {columns.map(([c, w]) => (
          <col key={c} className={w} />
        ))}
      </colgroup>
      <thead>
        <tr className="h-[38px]">
          <th aria-label="Select all" className="border-r-2 border-b-2 border-[#b8b8b8] bg-[#fafafa] p-0 pr-1">
            <svg width="24" height="24" viewBox="0 0 24 24" className="ml-auto" aria-hidden="true">
              <path d="M24 0v24H0Z" fill="#dedede" />
            </svg>
          </th>
          {columns.map(([c]) => (
            <th
              key={c}
              scope="col"
              className={`border-r-2 border-b-2 border-r-[#e4e4e4] p-0 text-center text-base font-normal ${
                c === "O"
                  ? "border-b-[#3b754b] bg-[#ededed] text-[#3b754b]"
                  : "border-b-[#b8b8b8] bg-linear-to-b from-white to-[#f7f7f7] text-[#5c5c5c]"
              }`}
            >
              {c}
            </th>
          ))}
        </tr>
      </thead>
      <tbody>
        {Array.from({ length: 56 }, (_, i) => (
          <Row key={i} row={i + 1} />
        ))}
      </tbody>
    </table>
    <div className="absolute top-[127px] left-[1412px]">
      <Radar
        title="Ratio des Notes de DUBOIS JEAN par matière pour le semestre 1"
        width={1188} height={543} titleY={25} cx={594} cy={293} r={142} max={16} x0={1412} y0={471}
        values={[10.5, 11.5, 12.5, 14.5, 0, 0, 0, 0, 0, 0, 0, 0, 13.5, 0, 0, 0]}
        labels={labels1}
      />
    </div>
    <div className="absolute top-[1003px] left-[1397px]">
      <Radar
        title="Ratio des Notes de DUBOIS JEAN par matière pour le semestre 2"
        width={1242} height={531} titleY={25} cx={620} cy={287} r={211} max={18} x0={1397} y0={1347}
        values={[8.5, 13, 14.5, 13.18, 10.5, 11, 17.5, 13.5, 0, 0, 0, 0, 0, 0, 11, 17.5, 13.5, 0, 0, 0, 13.5, 11, 0, 17.5, 13.5]}
        labels={labels2}
      />
    </div>
  </main>
);

/* ---------- bottom bars ---------- */

const sheetTabs = [
  "BD_etu_notes_S1_C1", "BD_etu_notes_S1_C2", "BD_etu_notes_S1_C3",
  "BD_etu_notes_S2_C1", "BD_etu_notes_S2_C2", "BD_etu_notes_S2_C3",
  "menu_eleve", "menu_demarage",
];
const SheetTabs = () => (
  <nav className="flex h-[54px] shrink-0 items-start border-t-2 border-b-2 border-t-[#cfcfcf] border-b-[#9f9f9f] bg-[#f0f0f0] font-['Liberation_Sans',sans-serif] text-2xl text-[#555]">
    <div className="flex h-[42px] w-[122px] items-center gap-9 border-r-2 border-[#cbcbcb] pt-1.5 pl-[34px]">
      <button aria-label="Previous sheet"><Icon w={16} h={22} stroke="none"><path d="M16 0v22L0 11Z" fill="#555" /></Icon></button>
      <button aria-label="Next sheet"><Icon w={16} h={22} stroke="none"><path d="M0 0v22l16-11Z" fill="#b9b9b9" /></Icon></button>
    </div>
    <button className="h-11 w-[240px] rounded-br bg-linear-to-r from-[#f0f0f0] via-white to-white pt-1 pl-9 text-left font-bold shadow-[4px_3px_3px_-2px_#bbb]">
      <span className="bg-linear-to-r from-[#c4d9ca] from-0% via-[#3f7d50] via-25% to-[#2f7542] bg-clip-text text-transparent">rech_etu_infos</span>
    </button>
    {sheetTabs.map((t) => (
      <button key={t} className="h-[42px] border-r-2 border-[#cbcbcb] px-[38px] pt-1.5">{t}</button>
    ))}
    <button aria-label="New sheet" className="flex h-[42px] w-[76px] items-center justify-center border-r-2 border-[#cbcbcb] pt-1.5">
      <Icon w={20} h={20} stroke="#4d4d4d" sw={3}><path d="M10 0v20M0 10h20" /></Icon>
    </button>
  </nav>
);

const StatusBar = () => (
  <footer className="flex h-11 shrink-0 items-center justify-between bg-linear-to-b from-[#e2e2e2] to-[#d6d6d6] text-[23px] text-[#4d4d4d]">
    <div className="flex items-center pl-12">
      <span>Ready</span>
      <button aria-label="Macro recording" className="pl-10">
        <Icon w={32} h={30} stroke="#595959" sw={2.500}>
          <circle cx="6" cy="6" r="5" fill="#595959" stroke="none" />
          <path d="M6 9v15M12 3h15q3 0 3 4h-6M24 7v16q0 4-4 4H4q-2 0-2-3h14q0 3 3 3" />
        </Icon>
      </button>
      <button className="flex items-center gap-2.5 pl-[34px]">
        <Icon w={32} h={32} stroke="#595959" sw={2.300}>
          <circle cx="15" cy="6" r="4" />
          <path d="m4 7 8 4v7L7 29M26 7l-8 4v6M2 9l8 4M18 19l12 11M30 19 18 30M12 18l3 3" />
        </Icon>
        Accessibility: Investigate
      </button>
    </div>
    <div className="flex h-full items-center pr-12">
      <button aria-label="Normal view" className="flex h-full w-[74px] items-center justify-center bg-[#a0a0a0]">
        <Icon w={26} h={26} stroke="#fff" sw={2}><path d="M1 1h24v24H1ZM1 9h24M1 17h24M9 1v24M17 1v24" /></Icon>
      </button>
      <button aria-label="Page layout view" className="flex w-[70px] items-center justify-center">
        <Icon w={28} h={26} stroke="#666" sw={2}><path d="M1 1h26v24H1ZM7 5h14v17H7ZM10 9h8M10 13h8M10 17h8" /></Icon>
      </button>
      <button aria-label="Page break preview" className="flex w-[70px] items-center justify-center">
        <Icon w={28} h={26} stroke="#666" sw={2}><path d="M1 1h26v24H1ZM1 14h17V1M9 1v13" /></Icon>
      </button>
      <button aria-label="Zoom out" className="flex w-12 items-center justify-center pl-1.5">
        <Icon w={16} h={16} stroke="#555" sw={3.500}><path d="M0 8h16" /></Icon>
      </button>
      <input
        type="range"
        aria-label="Zoom"
        min={0}
        max={100}
        defaultValue={42}
        className="h-1.5 w-[200px] appearance-none rounded-full bg-[#999] [&::-webkit-slider-thumb]:size-8 [&::-webkit-slider-thumb]:appearance-none [&::-webkit-slider-thumb]:rounded-full [&::-webkit-slider-thumb]:bg-white [&::-webkit-slider-thumb]:shadow"
      />
      <button aria-label="Zoom in" className="flex w-11 items-center justify-center">
        <Icon w={16} h={16} stroke="#555" sw={3.500}><path d="M0 8h16M8 0v16" /></Icon>
      </button>
      <button className="w-[76px] text-right">85%</button>
    </div>
  </footer>
);

export default function App() {
  return (
    <div className="flex h-screen w-full flex-col overflow-hidden bg-[#f5f5f5] font-[Inter,sans-serif]">
      <TitleBar />
      <MenuBar />
      <Ribbon />
      <FormulaBar />
      <Sheet />
      <SheetTabs />
      <StatusBar />
    </div>
  );
}
